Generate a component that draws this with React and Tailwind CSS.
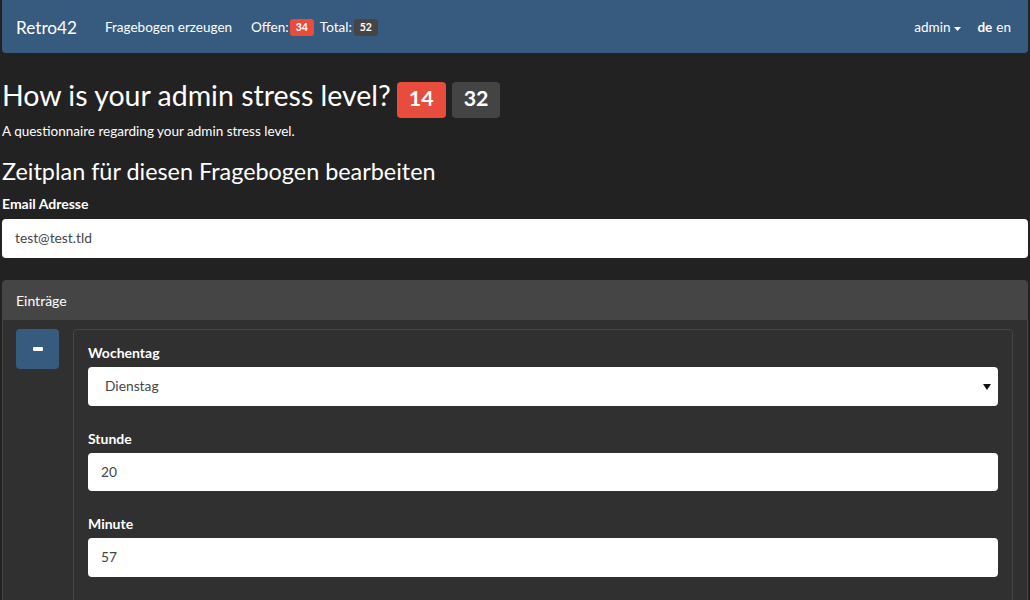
export default function App() {
  const font = { fontFamily: "Lato, 'Noto Sans', sans-serif" };
  return (
    <div className="min-h-[600px] bg-[#222222] text-white" style={font}>
      {/* Navbar */}
      <div className="mx-[2px] h-[53px] pt-[2px] bg-[#375a7f] rounded-b-[4px] flex items-center">
        <span className="ml-[14px] text-[17.2px] text-white">Retro42</span>
        <span className="ml-[28px] text-[13.5px] text-white">Fragebogen erzeugen</span>
        <span className="ml-[19px] text-[13.5px] text-white flex items-center">
          Offen:
          <span className="ml-[1px] bg-[#e74c3c] text-[10.5px] font-bold leading-none px-[6px] pt-[3px] pb-[4px] rounded-[3px]">34</span>
          <span className="ml-[6px]">Total:</span>
          <span className="ml-[2px] bg-[#464545] text-[10.5px] font-bold leading-none px-[6px] pt-[3px] pb-[4px] rounded-[3px]">52</span>
        </span>
        <span className="ml-auto text-[13.5px] flex items-center">
          admin
          <svg width="7" height="4" viewBox="0 0 7 4" className="ml-[4px] mt-[2px]">
            <polygon points="0,0 7,0 3.5,4" fill="white" />
          </svg>
        </span>
        <span className="ml-[16px] text-[13.5px] font-bold">de</span>
        <span className="ml-[4px] mr-[17px] text-[13.5px]">en</span>
      </div>

      <div className="px-[2px]">
        <div className="mt-[27px] flex items-baseline">
          <span className="text-[28.5px] leading-[31px]">How is your admin stress level?</span>
          <span className="ml-[6px] h-[36px] px-[12px] pt-[6px] text-[21.4px] font-bold leading-none rounded-[4px] bg-[#e74c3c]">14</span>
          <span className="ml-[6px] h-[36px] px-[12px] pt-[6px] text-[21.4px] font-bold leading-none rounded-[4px] bg-[#444444]">32</span>
        </div>
        <div className="mt-[4px] text-[13.5px] leading-[18px]">A questionnaire regarding your admin stress level.</div>
        <div className="mt-[18px] text-[23.4px] leading-[26px]">Zeitplan für diesen Fragebogen bearbeiten</div>
        <div className="mt-[10px] text-[14px] leading-[20px] font-bold">Email Adresse</div>
        <div className="mt-[5px] h-[39px] bg-white rounded-[4px] flex items-center px-[13px] text-[13.8px] text-[#464545]">test@test.tld</div>

        {/* Panel */}
        <div className="mt-[22px] rounded-t-[4px] border-x border-[#464545] bg-[#303030]">
          <div className="h-[40px] bg-[#464545] rounded-t-[4px] flex items-center px-[13px] text-[14px]">Einträge</div>
          <div className="pt-[9px] pl-[13px] pr-[14px] flex gap-[14px]">
            <div className="w-[43px] h-[40px] bg-[#375a7f] rounded-[4px] flex items-center justify-center shrink-0">
              <div className="w-[10px] h-[4px] bg-white rounded-[1px]"></div>
            </div>
            <div className="flex-1 border border-[#464545] rounded-[4px] pt-[13px] px-[14px] pb-[20px] min-h-[300px]">
              <div className="text-[14px] leading-[20px] font-bold">Wochentag</div>
              <div className="mt-[4px] h-[39px] bg-white rounded-[4px] flex items-center pl-[17px] pr-[7px] text-[13.8px] text-[#464545]">
                <span className="flex-1">Dienstag</span>
                <svg width="8" height="6" viewBox="0 0 8 6">
                  <polygon points="0,0 8,0 4,6" fill="#111" />
                </svg>
              </div>
              <div className="mt-[23px] text-[14px] leading-[20px] font-bold">Stunde</div>
              <div className="mt-[4px] h-[38px] bg-white rounded-[4px] flex items-center px-[13px] text-[13.8px] text-[#464545]">20</div>
              <div className="mt-[23px] text-[14px] leading-[20px] font-bold">Minute</div>
              <div className="mt-[4px] h-[39px] bg-white rounded-[4px] flex items-center px-[13px] text-[13.8px] text-[#464545]">57</div>
            </div>
          </div>
        </div>
      </div>
    </div>
  );
}
